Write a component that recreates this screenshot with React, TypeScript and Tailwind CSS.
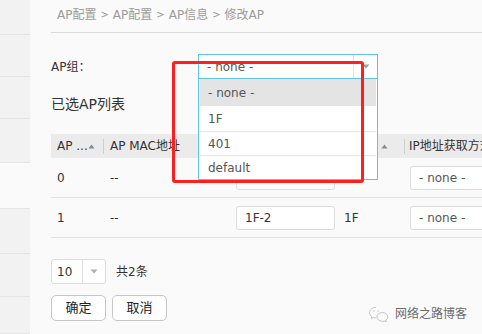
import React from "react";

const sideItems = [35, 42, 42, 44, 46, 45, 43, 37];

function SortUp() {
  return (
    <svg width="7" height="5" viewBox="0 0 7 5" className="shrink-0">
      <path d="M3.5 0.5 L6.5 4.5 L0.5 4.5 Z" fill="#8a8a8a" />
    </svg>
  );
}

function CaretDown({ color = "#9a9a9a" }: { color?: string }) {
  return (
    <svg width="8" height="5" viewBox="0 0 8 5">
      <path d="M0.5 0.5 L7.5 0.5 L4 4.5 Z" fill={color} />
    </svg>
  );
}

function HeadDivider() {
  return <span className="h-[15px] w-px shrink-0 bg-[#cfcfcf]" />;
}

function WeChat() {
  return (
    <svg width="22" height="16" viewBox="0 0 22 16" fill="none" stroke="#c4c4c4" strokeWidth="1">
      <path d="M8 1.5c-3.6 0-6.5 2.3-6.5 5.2 0 1.6.9 3 2.3 4l-.6 2 2.3-1.2c.8.2 1.6.4 2.5.4" />
      <path d="M14.5 6.5c-3 0-5.6 2-5.6 4.4s2.5 4.4 5.6 4.4c.7 0 1.3-.1 1.9-.3l1.9 1-.5-1.7c1.2-.8 2-2 2-3.4 0-2.4-2.4-4.400-5.3-4.4z" />
      <circle cx="5.8" cy="5" r=".7" fill="#c4c4c4" stroke="none" />
      <circle cx="10" cy="5" r=".7" fill="#c4c4c4" stroke="none" />
    </svg>
  );
}

type Row = { no: string; mac: string; name: string; group: string };

const rows: Row[] = [
  { no: "0", mac: "--", name: "", group: "" },
  { no: "1", mac: "--", name: "1F-2", group: "1F" },
];

export default function App() {
  return (
    <div className="relative flex h-[334px] w-[482px] overflow-hidden bg-[#fafafa] font-['DejaVu_Sans','Noto_Sans_CJK_SC',sans-serif] text-[12px] text-[#333]">
      {/* sidebar */}
      <aside className="flex w-[30px] shrink-0 flex-col bg-[#f2f2f2]">
        {sideItems.map((h, i) => (
          <div
            key={i}
            style={{ height: h }}
            className={i === 4 ? "shrink-0 border-b border-[#e4e4e4] bg-[#fafafa]" : "shrink-0 border-b border-[#e4e4e4]"}
          />
        ))}
      </aside>

      {/* main */}
      <main className="flex min-w-0 flex-1 flex-col pl-[21px]">
        <div className="flex h-[33px] items-center border-b border-[#dcdcdc] pb-[3px] pl-[6px] text-[#9a9a9a]">
          <span>AP配置</span>
          <span className="mx-[4px] text-[10px]">&gt;</span>
          <span>AP配置</span>
          <span className="mx-[4px] text-[10px]">&gt;</span>
          <span>AP信息</span>
          <span className="mx-[4px] text-[10px]">&gt;</span>
          <span>修改AP</span>
        </div>

        <div className="mt-[21px] flex h-[25px] items-center">
          <span className="w-[147px] shrink-0">AP组：</span>
          <div className="relative z-10 flex h-[25px] w-[180px] shrink-0 border border-[#62c3ec] bg-white">
            <span className="flex flex-1 items-center pl-[8px] text-[#555]">- none -</span>
            <span className="flex w-[24px] items-center justify-center border-l border-[#e2e2e2]">
              <CaretDown color="#a0a0a0" />
            </span>
            <div className="absolute left-[-1px] top-[24px] w-[180px] border border-t-0 border-[#62c3ec] bg-white px-px text-[#555]">
              <div className="flex h-[27px] items-center bg-[#e4e4e4] pl-[8px]">- none -</div>
              <div className="flex h-[25px] items-center pl-[8px]">1F</div>
              <div className="flex h-[24px] items-center border-t border-[#e6e6e6] pl-[8px]">401</div>
              <div className="flex h-[24px] items-center border-t border-[#e6e6e6] pl-[8px]">default</div>
            </div>
          </div>
        </div>

        <div className="mt-[15px] flex h-[20px] items-center text-[14px]">已选AP列表</div>

        <div className="mt-[20px] w-[520px] whitespace-nowrap">
          <div className="flex h-[24px] items-center bg-[#ebebeb]">
            <div className="flex w-[52px] shrink-0 items-center pl-[6px]">
              <span>AP ...</span>
              <span className="ml-auto mr-[8px]"><SortUp /></span>
              <HeadDivider />
            </div>
            <div className="flex w-[125px] shrink-0 items-center pl-[7px]">
              <span>AP MAC地址</span>
              <span className="ml-auto"><HeadDivider /></span>
            </div>
            <div className="flex w-[110px] shrink-0 items-center pl-[7px]">
              <span>AP名称</span>
              <span className="ml-auto mr-[10px]"><SortUp /></span>
              <HeadDivider />
            </div>
            <div className="flex w-[67px] shrink-0 items-center pl-[6px]">
              <span>AP组</span>
              <span className="ml-auto mr-[16px]"><SortUp /></span>
              <HeadDivider />
            </div>
            <div className="flex flex-1 items-center pl-[4px]">IP地址获取方式</div>
          </div>

          {rows.map((r) => (
            <div key={r.no} className="flex h-[40px] items-center border-b border-[#e2e2e2]">
              <div className="w-[52px] shrink-0 pl-[6px]">{r.no}</div>
              <div className="w-[125px] shrink-0 pl-[7px]">{r.mac}</div>
              <div className="w-[110px] shrink-0 pl-[8px]">
                <div className="flex h-[24px] w-[99px] items-center rounded-[3px] border border-[#dcdcdc] bg-white pl-[8px]">
                  {r.name}
                </div>
              </div>
              <div className="w-[67px] shrink-0 pl-[6px]">{r.group}</div>
              <div className="flex-1 pl-[5px]">
                <div className="flex h-[24px] w-[110px] items-center rounded-[3px] border border-[#dcdcdc] bg-white pl-[8px] text-[#555]">
                  - none -
                </div>
              </div>
            </div>
          ))}
        </div>

        <div className="mt-[21px] flex h-[25px] items-center">
          <div className="flex h-[25px] w-[55px] rounded-[3px] border border-[#dcdcdc] bg-white">
            <span className="flex w-[30px] items-center pl-[5px]">10</span>
            <span className="flex flex-1 items-center justify-center border-l border-[#e2e2e2]">
              <CaretDown color="#b0b0b0" />
            </span>
          </div>
          <span className="ml-[10px]">共2条</span>
        </div>

        <div className="mt-[11px] flex gap-[6px]">
          <button className="flex h-[26px] w-[55px] items-center justify-center rounded-[5px] border border-[#c6c6c6] bg-white text-[13px] text-[#222]">
            确定
          </button>
          <button className="flex h-[26px] w-[55px] items-center justify-center rounded-[5px] border border-[#c6c6c6] bg-white text-[13px] text-[#222]">
            取消
          </button>
        </div>
      </main>

      {/* annotation box */}
      <div className="pointer-events-none absolute left-[172px] top-[61px] z-20 h-[122px] w-[192px] rounded-[3px] border-[3px] border-[#ff1f1f]" />

      {/* watermark */}
      <div className="absolute left-[368px] top-[305px] flex items-center gap-[5px] text-[12px] text-[#6a6a6a]">
        <WeChat />
        <span>网络之路博客</span>
      </div>
    </div>
  );
}
